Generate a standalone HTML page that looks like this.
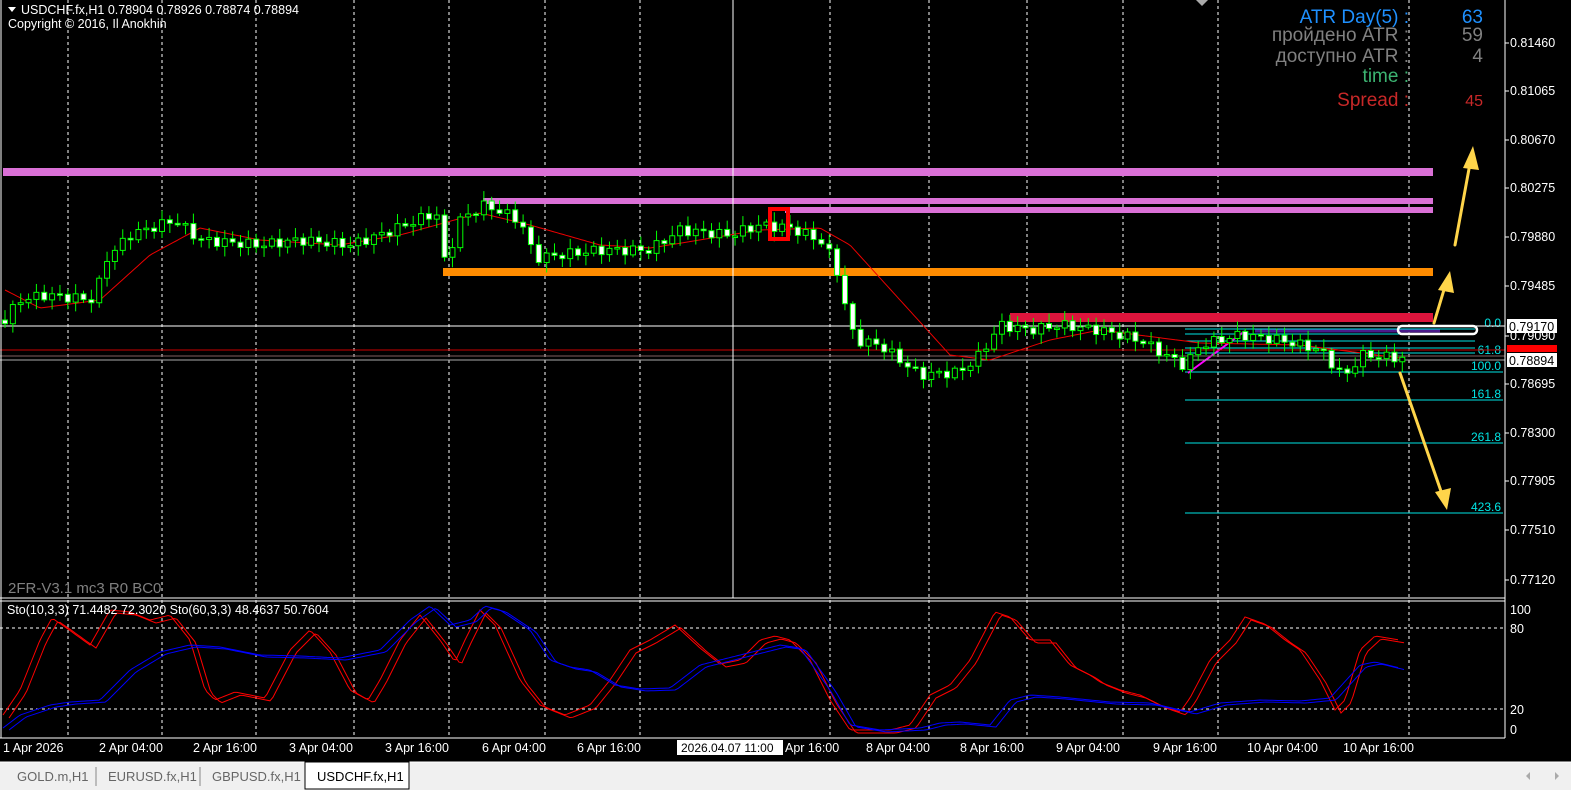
<!DOCTYPE html>
<html><head><meta charset="utf-8"><style>
html,body{margin:0;padding:0;background:#000;width:1571px;height:790px;overflow:hidden}
svg{display:block}
text{font-family:"Liberation Sans",sans-serif}
</style></head><body>
<svg id="s" width="1571" height="790" xmlns="http://www.w3.org/2000/svg">
<rect width="1571" height="790" fill="#000"/>
<g id="grid" stroke="#fff" stroke-dasharray="3,3" stroke-width="1"></g>
<rect x="3" y="168" width="1430" height="8" fill="#da70d6"/>
<rect x="483" y="198" width="950" height="6" fill="#da70d6"/>
<rect x="785" y="207" width="648" height="6" fill="#da70d6"/>
<rect x="443" y="268" width="990" height="8" fill="#ff8c00"/>
<rect x="1010" y="313" width="423" height="9" fill="#dc143c"/>
<g stroke="#00e5e5" stroke-width="1">
<line x1="1185" y1="329" x2="1475" y2="329"/>
<line x1="1185" y1="334" x2="1475" y2="334"/>
<line x1="1185" y1="341" x2="1475" y2="341"/>
<line x1="1185" y1="348" x2="1475" y2="348"/>
<line x1="1185" y1="353" x2="1475" y2="353"/>
<line x1="1185" y1="372" x2="1503" y2="372"/>
<line x1="1185" y1="400" x2="1503" y2="400"/>
<line x1="1185" y1="443" x2="1503" y2="443"/>
<line x1="1185" y1="513" x2="1503" y2="513"/>
</g>
<g fill="#00e5e5" font-size="12" text-anchor="end">
<text x="1501" y="327">0.0</text><text x="1501" y="354">61.8</text><text x="1501" y="370">100.0</text>
<text x="1501" y="398">161.8</text><text x="1501" y="441">261.8</text><text x="1501" y="511">423.6</text>
</g>
<line x1="1255" y1="331" x2="1440" y2="331" stroke="#4b1a8a" stroke-width="3"/>
<line x1="1188" y1="373" x2="1245" y2="331" stroke="#ff00ff" stroke-width="2"/>
<line x1="0" y1="326" x2="1505" y2="326" stroke="#fff"/>
<line x1="0" y1="350" x2="1505" y2="350" stroke="#c00"/>
<line x1="0" y1="356" x2="1505" y2="356" stroke="#806060"/>
<line x1="0" y1="360" x2="1505" y2="360" stroke="#aaa"/>
<line x1="733" y1="0" x2="733" y2="598" stroke="#fff"/>
<path id="ma" fill="none" stroke="#e00" stroke-width="1"/>
<g id="candles"></g>
<rect x="770" y="209" width="18" height="30" fill="none" stroke="#f00" stroke-width="4"/>
<rect x="1398" y="326" width="79" height="8" rx="4" fill="none" stroke="#fff" stroke-width="2.5"/>
<g stroke="#ffd54a" stroke-width="3" fill="#ffd54a" stroke-linecap="round">
<line x1="1455" y1="245" x2="1471" y2="158"/><polygon points="1473,146 1463,168 1479,170" stroke="none"/>
<line x1="1434" y1="323" x2="1446" y2="283"/><polygon points="1450,271 1438,290 1454,293" stroke="none"/>
<line x1="1400" y1="373" x2="1443" y2="497"/><polygon points="1447,510 1435,492 1451,488" stroke="none"/>
</g>
<line x1="1505" y1="0" x2="1505" y2="738" stroke="#fff"/>
<line x1="0" y1="598" x2="1505" y2="598" stroke="#fff"/>
<line x1="0" y1="601" x2="1505" y2="601" stroke="#fff"/>
<line x1="0" y1="738" x2="1505" y2="738" stroke="#fff"/>
<line x1="1" y1="0" x2="1" y2="738" stroke="#fff"/>
<g stroke="#fff" stroke-dasharray="3,3"><line x1="0" y1="628" x2="1505" y2="628"/><line x1="0" y1="709" x2="1505" y2="709"/></g>
<path id="r1" fill="none" stroke="#f00"/><path id="r2" fill="none" stroke="#f00"/>
<path id="b1" fill="none" stroke="#0000ff"/><path id="b2" fill="none" stroke="#0000ff"/>
<polygon points="8,7 16,7 12,12" fill="#fff"/>
<text x="21" y="14" font-size="12.5" fill="#fff">USDCHF.fx,H1  0.78904 0.78926 0.78874 0.78894</text>
<text x="8" y="28" font-size="12.5" fill="#fff">Copyright © 2016, Il Anokhin</text>
<text x="8" y="593" font-size="15" fill="#808080">2FR-V3.1 mc3 R0 BC0</text>
<text x="7" y="614" font-size="12.5" fill="#fff">Sto(10,3,3) 71.4482 72.3020  Sto(60,3,3) 48.4637 50.7604</text>
<polygon points="1196,0 1208,0 1202,6" fill="#aaa"/>
<g font-size="19" text-anchor="end">
<text x="1409" y="23" fill="#1e90ff">ATR Day(5) :</text><text x="1483" y="23" fill="#1e90ff">63</text>
<text x="1409" y="41" fill="#808080">пройдено ATR :</text><text x="1483" y="41" fill="#808080">59</text>
<text x="1409" y="62" fill="#808080">доступно ATR :</text><text x="1483" y="62" fill="#808080">4</text>
<text x="1409" y="82" fill="#3cb371">time :</text>
<text x="1409" y="106" fill="#c82828">Spread :</text><text x="1483" y="106" fill="#c82828" font-size="16">45</text>
</g>
<g id="ax" font-size="12.5" fill="#fff"></g>
<rect x="1507" y="319" width="50" height="14" fill="#fff"/><text x="1509" y="331" font-size="12.5" fill="#000">0.79170</text>
<rect x="1507" y="345" width="50" height="7" fill="#f00"/>
<rect x="1507" y="353" width="50" height="14" fill="#fff"/><text x="1509" y="365" font-size="12.5" fill="#000">0.78894</text>
<g font-size="12.5" fill="#fff">
<text x="1510" y="614">100</text><text x="1510" y="633">80</text><text x="1510" y="714">20</text><text x="1510" y="734">0</text>
</g>
<g id="tl" font-size="12.5" fill="#fff"></g>
<rect x="677" y="740" width="106" height="15" fill="#fff"/><text x="681" y="752" font-size="12" fill="#000">2026.04.07 11:00</text>
<rect x="0" y="762" width="1571" height="28" fill="#f0f0f0"/>
<line x1="0" y1="762" x2="1571" y2="762" stroke="#fff"/>
<rect x="305" y="762" width="104" height="27" fill="#fff" stroke="#000"/>
<g font-size="13" fill="#666"><text x="17" y="781">GOLD.m,H1</text><text x="108" y="781">EURUSD.fx,H1</text><text x="212" y="781">GBPUSD.fx,H1</text></g>
<text x="317" y="781" font-size="13" fill="#000">USDCHF.fx,H1</text>
<g stroke="#888"><line x1="96" y1="767" x2="96" y2="786"/><line x1="200" y1="767" x2="200" y2="786"/></g>
<polygon points="1530,772 1530,780 1526,776" fill="#aaa"/><polygon points="1555,772 1555,780 1559,776" fill="#aaa"/>
</svg>
<script>
var NS="http://www.w3.org/2000/svg";
function el(p,t,a,txt){var e=document.createElementNS(NS,t);for(var k in a)e.setAttribute(k,a[k]);if(txt)e.textContent=txt;p.appendChild(e);return e}
var g=document.getElementById('grid');
[68,162,256,354,449,545,640,830,929,1027,1123,1218,1409].forEach(function(x){el(g,'line',{x1:x,y1:0,x2:x,y2:738})});
var ax=document.getElementById('ax');
[["0.81460",43],["0.81065",91],["0.80670",140],["0.80275",188],["0.79880",237],["0.79485",286],["0.79090",336],["0.78695",384],["0.78300",433],["0.77905",481],["0.77510",530],["0.77120",580]].forEach(function(a){el(ax,'text',{x:1510,y:a[1]+4},a[0]);el(ax,'line',{x1:1505,y1:a[1],x2:1509,y2:a[1],stroke:'#fff'})});
var tl=document.getElementById('tl');
[["1 Apr 2026",3],["2 Apr 04:00",99],["2 Apr 16:00",193],["3 Apr 04:00",289],["3 Apr 16:00",385],["6 Apr 04:00",482],["6 Apr 16:00",577],["Apr 16:00",785],["8 Apr 04:00",866],["8 Apr 16:00",960],["9 Apr 04:00",1056],["9 Apr 16:00",1153],["10 Apr 04:00",1247],["10 Apr 16:00",1343]].forEach(function(a){el(tl,'text',{x:a[1],y:752},a[0])});
function interp(P,x){for(var i=1;i<P.length;i++){if(x<=P[i][0]){var a=P[i-1],b=P[i],t=(x-a[0])/(b[0]-a[0]);return a[1]+(b[1]-a[1])*t}}return P[P.length-1][1]}
function path(P,dx,dy){var d='';for(var x=P[0][0];x<=P[P.length-1][0];x+=3){d+=(d?'L':'M')+(x+dx)+','+(interp(P,x)+dy).toFixed(1)}return d}
var C=[[5,320],[20,300],[45,295],[95,300],[105,260],[130,235],[175,220],[200,240],[260,245],[300,240],[350,245],[380,235],[430,215],[440,215],[445,265],[460,220],[485,205],[520,220],[535,258],[560,255],[600,250],[650,250],[680,230],[730,235],[760,225],[790,228],[820,240],[835,262],[845,305],[855,340],[880,345],[900,360],[920,375],[960,372],[980,355],[1000,325],[1030,330],[1060,325],[1100,330],[1140,340],[1160,352],[1185,366],[1200,345],[1240,335],[1280,340],[1320,350],[1345,378],[1360,355],[1400,358]];
var cg=document.getElementById('candles'),prev=320,n=0;
for(var x=5;x<=1405;x+=7.85){n++;var c=interp(C,x)+Math.sin(n*2.3)*5,o=prev,yt=Math.min(o,c),yb=Math.max(o,c);
var hw=2+Math.abs(Math.sin(n*1.7))*8,lw=2+Math.abs(Math.cos(n*1.3))*8;
el(cg,'line',{x1:x,y1:yt-hw,x2:x,y2:yb+lw,stroke:'#00ff00'});
var h=Math.max(yb-yt,1.5);
el(cg,'rect',{x:x-2.5,y:yt,width:5,height:h,fill:(c>o)?'#fff':'#000',stroke:'#00ff00'});prev=c}
var MA=[[5,290],[40,308],[100,300],[150,255],[200,228],[260,240],[340,245],[400,235],[480,213],[530,225],[600,245],[650,248],[700,240],[760,230],[820,228],[850,245],[900,300],[950,355],[990,360],[1050,340],[1100,330],[1200,343],[1300,345],[1400,358]];
document.getElementById('ma').setAttribute('d',path(MA,0,0));
var R=[[3,715],[20,690],[40,640],[52,618],[65,627],[90,645],[110,610],[130,612],[150,620],[170,615],[190,640],[205,690],[215,700],[235,692],[250,695],[265,698],[290,650],[310,630],[330,652],[350,690],[368,700],[380,680],[400,640],[420,615],[440,640],[455,662],[465,640],[480,610],[495,625],[520,680],[540,705],[565,715],[590,705],[610,680],[630,650],[650,640],[675,625],[700,648],[720,664],[740,660],[760,640],[775,636],[790,640],[810,660],[830,700],[850,730],[870,730],[890,730],[910,725],[930,695],[950,685],[970,660],[995,612],[1010,617],[1030,640],[1050,640],[1070,665],[1090,675],[1100,682],[1120,690],[1140,695],[1160,705],[1180,712],[1190,698],[1210,660],[1230,640],[1245,617],[1265,624],[1285,640],[1300,650],[1320,680],[1335,710],[1345,700],[1360,650],[1375,636],[1400,640]];
var B=[[3,728],[20,715],[50,705],[70,702],[100,700],[130,670],[160,652],[190,645],[220,647],[260,655],[300,656],[340,658],[380,650],[410,620],[430,606],[450,625],[470,620],[485,606],[500,610],[530,630],[550,660],[570,667],[590,670],[615,685],[640,689],[670,688],[700,665],[740,655],[780,645],[800,648],[830,690],[850,725],[880,730],[920,728],[940,723],[960,722],[990,725],[1010,700],[1030,695],[1060,697],[1110,702],[1150,703],[1190,712],[1220,703],[1260,700],[1300,701],[1330,698],[1360,665],[1375,662],[1400,668]];
document.getElementById('r1').setAttribute('d',path(R,0,0));document.getElementById('r2').setAttribute('d',path(R,6,3));
document.getElementById('b1').setAttribute('d',path(B,0,0));document.getElementById('b2').setAttribute('d',path(B,6,2));
</script>
</body></html>
